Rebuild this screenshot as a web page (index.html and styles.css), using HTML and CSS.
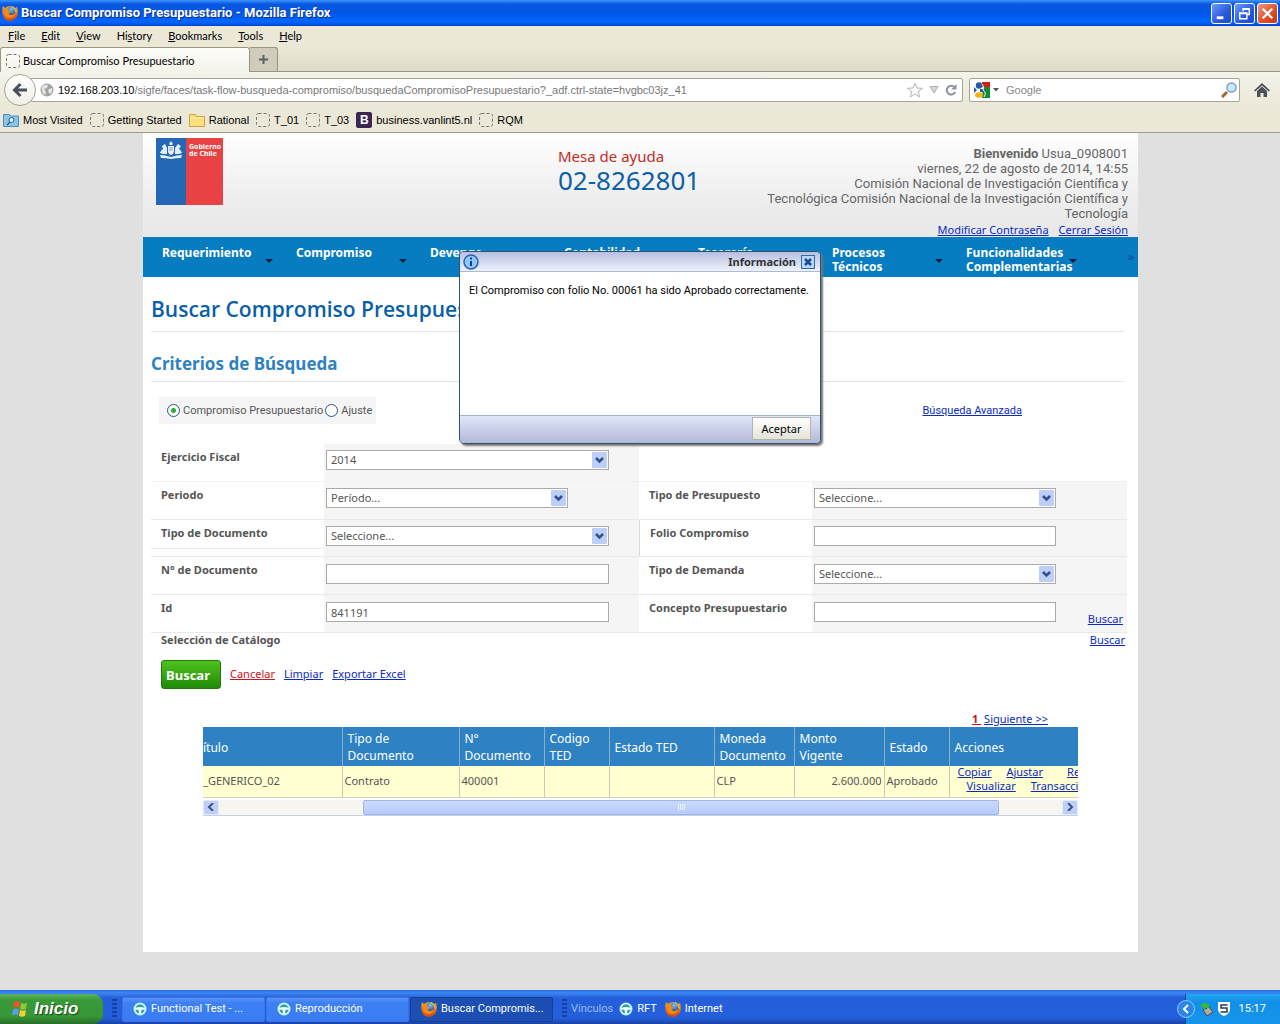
FILE: index.html
```html
<!DOCTYPE html>
<html lang="es">
<head>
<meta charset="utf-8">
<title>Buscar Compromiso Presupuestario</title>
<link rel="stylesheet" href="styles.css">
</head>
<body>
<svg class="defs" aria-hidden="true">
  <defs>
    <linearGradient id="gFox" x1="0" y1="0" x2="0" y2="1"><stop offset="0" stop-color="#f7a51e"/><stop offset="1" stop-color="#d9420b"/></linearGradient>
    <radialGradient id="gGlobe" cx=".5" cy=".3" r=".8"><stop offset="0" stop-color="#7cc4f4"/><stop offset="1" stop-color="#143a7c"/></radialGradient>
    <symbol id="fox" viewBox="0 0 16 16">
      <path d="M1 1l2 2q5-4 10 0l2-1q2 6-.5 10-3 4-7 4-5-.5-6.500-5Q-.5 6 1 1z" fill="url(#gFox)"/>
      <circle cx="9.300" cy="6" r="4.500" fill="url(#gGlobe)"/>
      <path d="M2 4q3-1 4.500 0L6 5.500l3 1Q8 8 6.500 8 7 10.500 10 10l3-2q-1 5-5.500 5Q2.500 13 2 8z" fill="#f08a1a"/>
      <path d="M10 1.500q4 2 4 6" stroke="#f9c23c" fill="none" stroke-width="1.200"/>
    </symbol>
    <symbol id="wheel" viewBox="0 0 14 14">
      <circle cx="7" cy="7" r="6.500" fill="#c9f5ef"/><circle cx="7" cy="7" r="4.500" fill="#2b9aa5"/>
      <path d="M2 6 Q7 4 12 6 L12 7.500 L8.500 8 L8 12 H6 L5.500 8 L2 7.500Z" fill="#e9fffb"/>
    </symbol>
    <symbol id="blank" viewBox="0 0 14 14"><rect x=".5" y=".5" width="13" height="13" rx="2" fill="none" stroke="#77756c" stroke-dasharray="3 2"/></symbol>
  </defs>
</svg>

<header class="browser">
  <div class="titlebar">
    <svg class="i16"><use href="#fox"/></svg>
    <span class="wtitle">Buscar Compromiso Presupuestario - Mozilla Firefox</span>
    <button class="wbtn" aria-label="Minimizar"><svg viewBox="0 0 20 20"><rect x="5" y="13" width="7" height="3" fill="#fff"/></svg></button>
    <button class="wbtn" aria-label="Restaurar"><svg viewBox="0 0 20 20"><path d="M8.500 7.500V5H15v6h-2.500M8 5.500h7M5 9.500h7.500v6h-7.500zM5 10h7" fill="none" stroke="#fff" stroke-width="1.500"/></svg></button>
    <button class="wbtn red" aria-label="Cerrar"><svg viewBox="0 0 20 20"><path d="M5 5l10 10M15 5L5 15" stroke="#fff" stroke-width="2.400"/></svg></button>
  </div>
  <nav class="menubar">
    <a href="#"><u>F</u>ile</a><a href="#"><u>E</u>dit</a><a href="#"><u>V</u>iew</a><a href="#">Hi<u>s</u>tory</a><a href="#"><u>B</u>ookmarks</a><a href="#"><u>T</u>ools</a><a href="#"><u>H</u>elp</a>
  </nav>
  <div class="tabs">
    <div class="tab"><svg class="i14"><use href="#blank"/></svg>Buscar Compromiso Presupuestario</div>
    <button class="newtab" aria-label="Nueva pestaña"><svg viewBox="0 0 12 12"><path d="M6 1v10M1 6h10" stroke="#5b6065" stroke-width="2.200"/></svg></button>
  </div>
  <div class="navbar">
    <button class="back" aria-label="Atrás"><svg viewBox="0 0 18 18"><path d="M16 9H4M9.500 3L3.500 9l6 6" fill="none" stroke="#48515c" stroke-width="3"/></svg></button>
    <div class="url">
      <svg class="i14" viewBox="0 0 14 14"><circle cx="7" cy="7" r="6.500" fill="#a3a3a3"/><path d="M2 4q3-3 6-2l-1 3-3 1 2 3-1 3Q1 9 2 4M9 6l3-1q1 4-2 6l-2-3z" fill="#e6e6e6"/></svg>
      <span class="addr"><b>192.168.203.10</b>/sigfe/faces/task-flow-busqueda-compromiso/busquedaCompromisoPresupuestario?_adf.ctrl-state=hvgbc03jz_41</span>
      <svg class="i16" viewBox="0 0 16 16"><path d="M8 1l2 5 5.500.3-4.300 3.400 1.500 5.300L8 12l-4.700 3 1.500-5.300L.5 6.300 6 6z" fill="#fbfbfb" stroke="#b5b5b5"/></svg>
      <svg class="i10" viewBox="0 0 10 10"><path d="M1 1.500h8L5 8z" fill="#d8d8d8" stroke="#b0b0b0"/></svg>
      <svg class="i12" viewBox="0 0 12 12"><path d="M9.500 3.200A4.400 4.400 0 1 0 10.200 8" fill="none" stroke="#8b94a0" stroke-width="2"/><path d="M11.500 0v5.500H6z" fill="#8b94a0"/></svg>
    </div>
    <div class="search">
      <svg class="i16" viewBox="0 0 16 16"><path d="M8 0h8v5H8z" fill="#d61f13"/><path d="M9 5h7v11H8z" fill="#128a37"/><circle cx="5" cy="3.500" r="3.200" fill="#2459a8"/><path d="M0 5l3 3-3 3zM6 7h4v3H6z" fill="#2459a8"/><ellipse cx="5" cy="13" rx="4" ry="2.700" fill="#f5b31b"/><path d="M8 2q3 3 1 6 4 3 1 7" stroke="#fff" fill="none"/></svg>
      <svg class="i6" viewBox="0 0 6 6"><path d="M0 1h6L3 4.500z" fill="#555"/></svg>
      <input type="text" aria-label="Buscar en Google" placeholder="Google">
      <svg class="i16" viewBox="0 0 16 16"><path d="M1 15l5-5" stroke="#a8632e" stroke-width="3"/><circle cx="10.500" cy="5.500" r="4.500" fill="#cfe9fb" stroke="#6fa4d4" stroke-width="1.500"/></svg>
    </div>
    <svg class="i16 home" viewBox="0 0 16 16"><path d="M0 8.500L8 1l8 7.500-1.200 1L8 3.500 1.200 9.500z" fill="#4b5157"/><path d="M3 9l5-4.500L13 9v6H9.500v-4h-3v4H3z" fill="#4b5157"/></svg>
  </div>
  <nav class="bookmarks">
    <a href="#"><svg class="i16" viewBox="0 0 16 16"><path d="M.5 2.500h6l1 1.500h8v10.500H.5z" fill="#8cc5ea" stroke="#4b8fc2"/><circle cx="8.500" cy="8" r="2.500" fill="#d9effc" stroke="#28648f"/><path d="M7 10l-3 3" stroke="#28648f" stroke-width="1.500"/></svg>Most Visited</a>
    <a href="#"><svg class="i14"><use href="#blank"/></svg>Getting Started</a>
    <a href="#"><svg class="i16" viewBox="0 0 16 16"><path d="M.5 2.500h6l1 2h8v10H.5z" fill="#fbdf7c" stroke="#cfa33a"/><path d="M1 6h14" stroke="#fff3bd"/></svg>Rational</a>
    <a href="#"><svg class="i14"><use href="#blank"/></svg>T_01</a>
    <a href="#"><svg class="i14"><use href="#blank"/></svg>T_03</a>
    <a href="#"><span class="bee">B</span>business.vanlint5.nl</a>
    <a href="#"><svg class="i14"><use href="#blank"/></svg>RQM</a>
  </nav>
</header>

<main class="site">
  <header class="banner">
    <div class="logo">
      <div class="crest"><svg viewBox="0 0 24 18"><path d="M12 0l2 3-1 1h-2l-1-1zM9 5h6v6q-1 3-3 3t-3-3zM1 12q1-3 3-4L3 5l3-2 2 4v6H4zM23 12q-1-3-3-4l2-3-3-2-3 4v6h4zM1 14q5 0 11 2 6-2 11-2l-1 3q-5 0-10 1-5-1-10-1z" fill="#e4effa"/><path d="M10 7h4M10 9h4" stroke="#7fa8d8"/></svg></div>
      <div class="gob">Gobierno<br>de Chile</div>
    </div>
    <div class="help"><span>Mesa de ayuda</span><strong>02-8262801</strong></div>
    <div class="user">
      <div><b>Bienvenido</b> Usua_0908001</div>
      <div>viernes, 22 de agosto de 2014, 14:55</div>
      <div>Comisión Nacional de Investigación Científica y</div>
      <div>Tecnológica Comisión Nacional de la Investigación Científica y</div>
      <div>Tecnología</div>
      <div class="ulinks"><a href="#">Modificar Contraseña</a><a href="#">Cerrar Sesión</a></div>
    </div>
  </header>
  <nav class="menu">
    <a href="#">Requerimiento</a><a href="#">Compromiso</a><a href="#">Devengo</a><a href="#">Contabilidad</a><a href="#">Tesorería</a><a href="#">Procesos Técnicos</a><a href="#">Funcionalidades Complementarias</a><span class="more">»</span>
  </nav>

  <section class="content">
    <h1>Buscar Compromiso Presupuestario</h1>
    <h2>Criterios de Búsqueda</h2>
    <div class="mode">
      <div class="radios">
        <label><input type="radio" name="tipo" checked>Compromiso Presupuestario</label>
        <label><input type="radio" name="tipo">Ajuste</label>
      </div>
      <a href="#">Búsqueda Avanzada</a>
    </div>

    <form class="criteria">
      <div class="row">
        <label for="ej">Ejercicio Fiscal</label><div class="cell"><select id="ej" class="wide"><option>2014</option></select></div>
      </div>
      <div class="row">
        <label for="pe">Periodo</label><div class="cell"><select id="pe"><option>Período...</option></select></div>
        <label for="tp">Tipo de Presupuesto</label><div class="cell"><select id="tp"><option>Seleccione...</option></select></div>
      </div>
      <div class="row ruled">
        <label for="td">Tipo de Documento</label><div class="cell"><select id="td" class="wide"><option>Seleccione...</option></select></div>
        <label for="fc">Folio Compromiso</label><div class="cell"><input id="fc" type="text"></div>
      </div>
      <div class="row low">
        <label for="nd">N° de Documento</label><div class="cell"><input id="nd" class="wide" type="text"></div>
        <label for="dm">Tipo de Demanda</label><div class="cell"><select id="dm"><option>Seleccione...</option></select></div>
      </div>
      <div class="row low">
        <label for="id">Id</label><div class="cell"><input id="id" class="wide" type="text" value="841191"></div>
        <label for="cp">Concepto Presupuestario</label><div class="cell"><input id="cp" type="text"><a class="find" href="#">Buscar</a></div>
      </div>
      <div class="catalog"><b>Selección de Catálogo</b><a href="#">Buscar</a></div>
      <div class="actions">
        <button type="button" class="go">Buscar</button>
        <a class="red" href="#">Cancelar</a><a href="#">Limpiar</a><a href="#">Exportar Excel</a>
      </div>
    </form>

    <div class="results">
      <div class="pager"><a class="cur" href="#">1 </a> <a href="#">Siguiente &gt;&gt;</a></div>
      <div class="clip">
        <table>
          <colgroup><col class="c140"><col class="c117"><col class="c85"><col class="c65"><col class="c105"><col class="c80"><col class="c90"><col class="c65"><col></colgroup>
          <thead><tr><th class="cut">ítulo</th><th>Tipo de Documento</th><th>N° Documento</th><th>Codigo TED</th><th>Estado TED</th><th>Moneda Documento</th><th>Monto Vigente</th><th>Estado</th><th>Acciones</th></tr></thead>
          <tbody><tr><td class="cut">_GENERICO_02</td><td>Contrato</td><td>400001</td><td></td><td></td><td>CLP</td><td class="num">2.600.000</td><td>Aprobado</td>
          <td class="acts"><div><a href="#">Copiar</a><a href="#">Ajustar</a><a href="#" class="far">Re</a></div><div class="second"><a href="#">Visualizar</a><a href="#">Transacci</a></div></td></tr></tbody>
        </table>
      </div>
      <div class="scroll">
        <button aria-label="Izquierda"><svg viewBox="0 0 8 8"><path d="M6 0L2 4l4 4" fill="none" stroke="#3c5186" stroke-width="2"/></svg></button>
        <div class="track"><div class="thumb"><i></i><i></i><i></i><i></i></div></div>
        <button aria-label="Derecha"><svg viewBox="0 0 8 8"><path d="M2 0l4 4-4 4" fill="none" stroke="#3c5186" stroke-width="2"/></svg></button>
      </div>
    </div>
  </section>
</main>

<div class="dialog" role="dialog" aria-label="Información">
  <div class="dhead">
    <svg class="i16" viewBox="0 0 16 16"><circle cx="8" cy="8" r="7" fill="#8fc8f8" stroke="#2a62b4" stroke-width="1.500"/><path d="M8 3.500v2M8 7v5" stroke="#123f92" stroke-width="2" fill="none"/></svg>
    <b>Información</b>
    <button class="x" aria-label="Cerrar"><svg viewBox="0 0 8 8"><path d="M1 1l6 6M7 1L1 7" stroke="#1c4a8e" stroke-width="2.500"/></svg></button>
  </div>
  <p>El Compromiso con folio No. 00061 ha sido Aprobado correctamente.</p>
  <div class="dfoot"><button>Aceptar</button></div>
</div>

<footer class="taskbar">
  <button class="start"><svg viewBox="0 0 18 18"><path d="M3 2q3-2 6 0L8 8Q5 6 2 8z" fill="#e8562a"/><path d="M10 3q3 1.500 6 0l-1 6q-3 1.500-6 0z" fill="#8ccb35"/><path d="M2 9.500q3-2 6 0L7 15.500q-3-2-6 0z" fill="#5b9bf0"/><path d="M9 10q3 1.500 6 0l-1 6q-3 1.500-6 0z" fill="#f7cc34"/></svg>Inicio</button>
  <span class="grip"></span>
  <button class="task"><svg class="i14"><use href="#wheel"/></svg>Functional Test - ...</button>
  <button class="task"><svg class="i14"><use href="#wheel"/></svg>Reproducción</button>
  <button class="task on"><svg class="i16"><use href="#fox"/></svg>Buscar Compromis...</button>
  <span class="grip"></span>
  <span class="vin">Vínculos</span>
  <a href="#"><svg class="i14"><use href="#wheel"/></svg>RFT</a>
  <a href="#"><svg class="i16"><use href="#fox"/></svg>Internet</a>
  <div class="tray">
    <button aria-label="Mostrar iconos"><svg viewBox="0 0 18 18"><circle cx="9" cy="9" r="8.500" fill="#2a86e8" stroke="#8cc9fa"/><path d="M11 5L7 9l4 4" fill="none" stroke="#fff" stroke-width="2"/></svg></button>
    <svg class="i14" viewBox="0 0 14 14"><path d="M4 8l6-3 4 5-6 4z" fill="#a9aea6" stroke="#3c4a44"/><path d="M1 3l6-3v2h3v4H6v2z" fill="#3eb33a"/></svg>
    <svg class="i14" viewBox="0 0 14 14"><path d="M1 0h12v8q-1 4-6 6-5-2-6-6z" fill="#fff"/><path d="M10.500 3H4v3h6v4H3.500" fill="none" stroke="#2a3a50" stroke-width="1.500"/></svg>
    <time>15:17</time>
  </div>
</footer>
</body>
</html>
```
FILE: styles.css
```css
* { box-sizing: border-box; }
body { margin: 0; min-height: 100vh; display: flex; flex-direction: column; position: relative; background: #e0e0e0; font: 11px/14px "Noto Sans", sans-serif; color: #555; }
button, input, select { font: inherit; color: inherit; margin: 0; padding: 0; }
svg { flex: none; display: block; }
a { color: #0a2ac0; }
.defs { position: absolute; width: 0; height: 0; }
.i16 { width: 16px; height: 16px; }
.i14 { width: 14px; height: 14px; }
.i12 { width: 12px; height: 12px; }
.i10 { width: 10px; height: 10px; }
.i6 { width: 6px; height: 6px; }

/* browser window */
.browser { background: #ebe8d8; color: #000; font-family: "Liberation Sans", sans-serif; border-bottom: 1px solid #9f9c88; }
.browser a { color: #000; text-decoration: none; }
.titlebar { display: flex; align-items: center; gap: 2px; height: 26px; padding: 0 2px; background: linear-gradient(#3c94ff, #0a58e0 4px, #0055e6 12px, #0468fd 22px, #0144d0); }
.wtitle { flex: 1; padding-left: 1px; color: #fff; font: bold 13px/16px Roboto, sans-serif; text-shadow: 1px 1px #0a2f8a; }
.wbtn { width: 21px; height: 21px; border: 1px solid #fff; border-radius: 3px; background: linear-gradient(135deg, #6f9bf5, #2858dc 60%, #1f4bc6); }
.wbtn.red { background: linear-gradient(135deg, #f0997c, #dc4f28 60%, #c03a12); }
.menubar { display: flex; gap: 16px; height: 21px; padding: 0 8px 1px; align-items: center; font-family: Lato, sans-serif; }
.tabs { display: flex; height: 25px; background: linear-gradient(#ebe8d8, #dedbc9); border-bottom: 1px solid #98967f; font-family: Lato, sans-serif; }
.tab { display: flex; align-items: center; gap: 3px; width: 250px; height: 25px; padding: 2px 5px 0; background: linear-gradient(#fcfcf9, #f4f3ea); border: 1px solid #98967f; border-bottom: 0; border-radius: 3px 3px 0 0; }
.newtab { width: 28px; height: 24px; display: grid; place-items: center; background: #cfccbb; border: 1px solid #98967f; border-left: 0; border-bottom: 0; border-radius: 0 3px 0 0; }
.newtab svg { width: 11px; height: 11px; }
.navbar { display: flex; align-items: center; height: 36px; padding: 0 10px 0 4px; background: linear-gradient(#f4f3ea, #ebe8d8); }
.back { position: relative; z-index: 1; width: 32px; height: 32px; flex: none; border: 1px solid #a5a393; border-radius: 50%; background: linear-gradient(#fff, #f1efe6); display: grid; place-items: center; }
.back svg { width: 18px; height: 18px; }
.url, .search { display: flex; align-items: center; height: 24px; background: #fff; border: 1px solid #a5a393; border-radius: 2px; }
.url { flex: 1; min-width: 0; gap: 6px; margin-left: -6px; padding: 0 5px 0 9px; }
.addr { flex: 1; overflow: hidden; white-space: nowrap; color: #777; margin-left: -2px; }
.addr b { font-weight: normal; color: #000; }
.search { width: 271px; margin: 0 14px 0 6px; padding: 0 2px 0 4px; gap: 3px; }
.search input { flex: 1; min-width: 0; border: 0; padding-left: 4px; }
.search input::placeholder { color: #888; }
.bookmarks { display: flex; align-items: center; gap: 7px; height: 24px; padding: 0 3px; }
.bookmarks a { display: flex; align-items: center; gap: 4px; }
.bee { width: 16px; height: 16px; border-radius: 2px; background: #3a2650; color: #fff; font: bold 12px/16px "Liberation Sans", sans-serif; text-align: center; }

/* site */
.site { flex: 1; margin: 0 142px 38px 143px; background: #fff; }
.banner { display: grid; grid-template-columns: 402px 1fr auto; height: 104px; padding: 5px 10px 0 13px; background: linear-gradient(#fff, #ececec 70%, #e8e8e8); }
.logo { display: flex; width: 67px; height: 67px; background: linear-gradient(90deg, #2467b5 30px, #e84244 30px); color: #fff; }
.crest { width: 30px; padding: 3px 3px 0; }
.crest svg { width: 24px; height: 18px; }
.gob { padding: 5px 0 0 3px; font: bold 7px/7px "Noto Sans", sans-serif; }
.help { display: flex; flex-direction: column; padding-top: 10px; color: #c42b1c; font-size: 15px; line-height: 17px; }
.help strong { font: 26px/30px "Noto Sans", sans-serif; color: #0a5fa8; }
.user { padding-top: 8px; text-align: right; font: 13px/15px Roboto, sans-serif; color: #666; }
.ulinks { display: flex; justify-content: flex-end; gap: 10px; padding-top: 2px; font: 11px/14px "Noto Sans", sans-serif; }
.menu { display: flex; height: 40px; padding: 9px 0 0 19px; background: #077cc0; color: #fff; }
.menu a { flex: 0 0 134px; display: grid; grid-template-columns: 103px 8px; color: #fff; font: bold 12px/14px "Noto Sans", sans-serif; text-decoration: none; }
.menu a::after { content: ""; width: 0; height: 0; margin-top: 13px; border: 4px solid transparent; border-top-color: #04203a; border-bottom: 0; }
.more { margin: 3px 4px 0 auto; color: #0b4a9c; font-size: 13px; }
.content { padding: 0 14px 0 8px; }
h1 { margin: 0; height: 55px; padding-top: 18px; border-bottom: 1px solid #e6e6e6; color: #0a5fa8; font: 600 21px/28px "Open Sans", sans-serif; }
h2 { margin: 0; height: 50px; padding-top: 20px; border-bottom: 1px solid #e6e6e6; color: #2e82c2; font: bold 17px/24px "Noto Sans", sans-serif; }
.mode { display: flex; justify-content: space-between; align-items: center; margin: 15px 102px 20px 8px; font-family: Roboto, sans-serif; }
.radios { display: flex; gap: 2px; height: 27px; padding: 0 4px 0 8px; background: #f5f5f5; }
.radios label { display: flex; align-items: center; gap: 3px; }
.radios input { appearance: none; width: 13px; height: 13px; border: 1px solid #2b5580; border-radius: 50%; background: #fff; }
.radios input:checked { background: radial-gradient(circle, #2fae2f 2px, #fff 3px); }
.criteria { margin-right: -3px; }
.row { display: grid; grid-template-columns: 173px 1fr 173px 1fr; height: 38px; border-bottom: 1px solid #e9e9e9; }
.row:first-child { grid-template-columns: 173px 1fr 488px; border-bottom-color: #f0f0f0; }
.row > label { padding: 6px 0 0 10px; font-weight: bold; }
.row.ruled { height: 37px; }
.ruled > label:first-child { height: 29px; border-bottom: 1px solid #e9e9e9; }
.ruled > label:nth-of-type(2) { border-left: 1px solid #dcdcdc; }
.cell { display: flex; align-items: flex-start; padding: 6px 2px 0; background: #f5f5f5; }
.low .cell { padding-top: 7px; }
.cell input, .cell select { width: 242px; height: 20px; padding: 0 4px; border: 1px solid #aaa; border-radius: 0; background: #fff; appearance: none; }
.cell .wide { width: 283px; }
.cell select { background: #fff url("data:image/svg+xml,%3Csvg xmlns='http://www.w3.org/2000/svg' width='15' height='16'%3E%3Crect width='15' height='16' rx='1' fill='%23bccff8'/%3E%3Cpath d='M4 6l3.500 3.500L11 6' fill='none' stroke='%23344f88' stroke-width='2.500'/%3E%3C/svg%3E") no-repeat right 1px center; }
.find { margin: 10px 2px 0 auto; }
.catalog { display: flex; justify-content: space-between; padding: 0 2px 0 10px; }
.actions { display: flex; align-items: center; gap: 9px; margin: 13px 0 0 10px; }
.go { width: 60px; height: 29px; padding-right: 6px; border: 1px solid #1f7a0a; border-radius: 3px; background: linear-gradient(#4fc21d, #1f8a08); color: #fff; font-weight: bold; font-size: 13px; }
.actions a { padding-bottom: 2px; }
.actions .red, .pager .cur { color: #d01020; }
.results { margin: 23px 46px 0 52px; }
.pager { padding: 0 30px 1px 0; text-align: right; }
.pager .cur { font-weight: bold; white-space: pre; }
.clip { overflow: hidden; }
table { width: 100%; table-layout: fixed; border-collapse: collapse; }
.c140 { width: 139px; } .c117 { width: 117px; } .c85 { width: 85px; } .c65 { width: 65px; } .c105 { width: 105px; } .c80 { width: 80px; } .c90 { width: 90px; }
th, td { text-align: left; border-right: 1px solid #c8c8b8; }
th:last-child, td:last-child { border-right: 0; }
th { height: 39px; padding: 3px 5px 2px; background: #2e82c4; color: #fff; font-weight: normal; font-size: 12px; line-height: 17px; border-right-color: #8cb0c8; }
td { height: 31px; padding: 0 2px; background: #ffffd2; border-bottom: 1px solid #d0d0c0; white-space: nowrap; }
th.cut, td.cut { padding-left: 0; }
.num { text-align: right; }
td.acts { padding: 0; vertical-align: top; }
.acts div { display: flex; gap: 15px; padding-left: 8px; }
.acts div:first-child { margin-top: -1px; }
.acts .far { margin-left: 9px; }
.acts div.second { padding-left: 17px; }
.scroll { display: flex; height: 16px; margin-top: 2px; background: #f6f5ef; border-bottom: 1px solid #c5cfe6; }
.scroll button { width: 16px; height: 15px; display: grid; place-items: center; border: 1px solid #e4ebfc; border-radius: 2px; background: #bed0fa; }
.scroll button svg { width: 8px; height: 8px; }
.track { flex: 1; padding: 0 63px 0 144px; }
.thumb { display: flex; justify-content: center; align-items: center; gap: 1px; height: 15px; border: 1px solid #9db5ea; border-radius: 2px; background: linear-gradient(#cbdafc, #b7cbfb); }
.thumb i { width: 1px; height: 6px; background: #eef4fe; }

/* message window */
.dialog { position: absolute; left: 0; right: 0; top: 251px; width: 362px; height: 193px; margin: 0 auto; display: flex; flex-direction: column; background: #fff; border: 1px solid #23556e; border-radius: 5px; box-shadow: 2px 2px 2px #777; overflow: hidden; }
.dhead { display: flex; align-items: center; gap: 5px; height: 20px; padding: 0 5px 0 3px; background: linear-gradient(#b8bfdf, #edf2fd); border-bottom: 1px solid #b0bad6; color: #333; }
.dhead b { margin-left: auto; }
.x { width: 14px; height: 14px; display: grid; place-items: center; border: 1px solid #3769a8; background: #b8d6f6; }
.x svg { width: 8px; height: 8px; }
.dialog p { flex: 1; margin: 0; padding: 12px 9px; color: #000; font-family: Roboto, sans-serif; white-space: nowrap; }
.dfoot { display: flex; justify-content: flex-end; height: 28px; padding: 1px 9px 0; border-top: 1px solid #a3b0d0; background: linear-gradient(#dfe8fb, #b5b7d6); }
.dfoot button { width: 59px; height: 23px; border: 1px solid #b5b4a8; background: linear-gradient(#fff, #e4e3d8); color: #000; }

/* taskbar */
.taskbar { display: flex; align-items: center; height: 34px; padding-top: 4px; background: linear-gradient(#2a6fdc, #3b86f2 3px, #245edb 8px, #2460dc 28px, #1941a5); color: #fff; font-family: Roboto, sans-serif; }
.taskbar a { display: flex; align-items: center; gap: 4px; margin-left: 6px; color: #fff; text-decoration: none; }
.taskbar a + a { margin-left: 8px; }
.start { display: flex; align-items: center; gap: 5px; width: 103px; height: 30px; padding-left: 11px; border: 0; border-radius: 0 10px 10px 0; background: linear-gradient(#5eb35e, #3a9a3a 6px, #379637 22px, #276e27); font: italic bold 17px/20px "Liberation Sans", sans-serif; color: #fff; text-shadow: 1px 1px 1px #1b4a1b; }
.start svg { width: 18px; height: 18px; }
.grip { width: 5px; height: 20px; margin: 0 4px 0 9px; background: repeating-linear-gradient(#1b3f9e 0 2px, transparent 2px 4px); }
.task { display: flex; align-items: center; gap: 4px; width: 143px; height: 25px; margin-left: 1px; padding-left: 10px; border: 1px solid #3a74e8; border-radius: 2px; background: linear-gradient(#5a94fa, #3c80f4 5px, #3a7cf2); color: #fff; }
.task.on { background: #1c4fb4; border-color: #163f94; }
.vin { color: #9db9ee; }
.tray { display: flex; align-items: center; gap: 4px; height: 30px; margin-left: auto; padding-right: 14px; border-left: 1px solid #10459e; background: linear-gradient(#22a8f2, #1290e8 8px, #1595ea); }
.tray button { width: 18px; height: 18px; margin-left: -9px; border: 0; background: none; }
.tray time { margin-left: 4px; }
```
